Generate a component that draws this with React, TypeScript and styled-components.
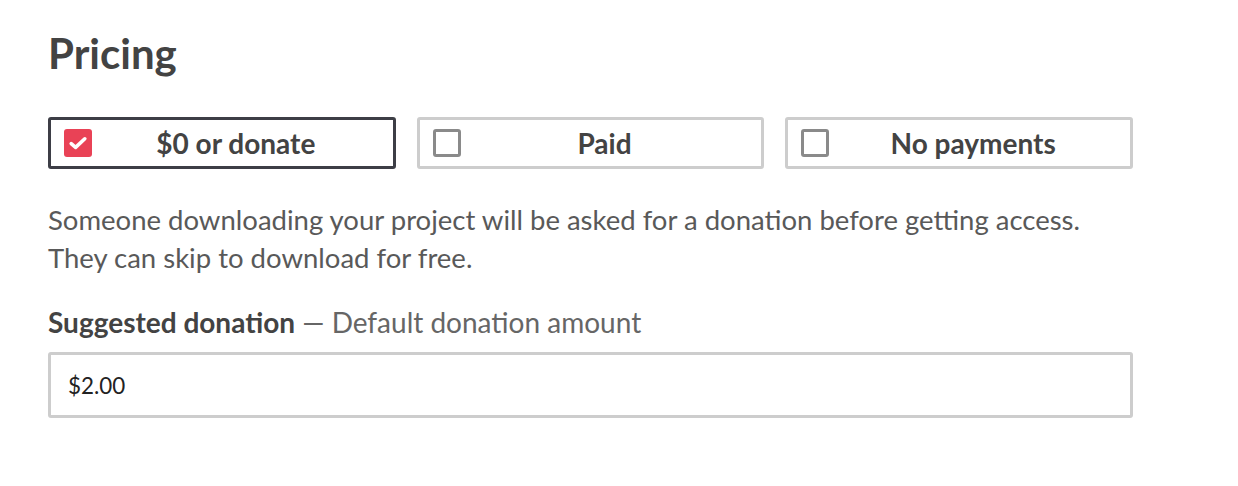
import React, { useState } from 'react';
import styled, { createGlobalStyle } from 'styled-components';

type PriceOption = 'donate' | 'paid' | 'none';

const options: { id: PriceOption; label: string }[] = [
  { id: 'donate', label: '$0 or donate' },
  { id: 'paid', label: 'Paid' },
  { id: 'none', label: 'No payments' },
];

const descriptions: Record<PriceOption, string[]> = {
  donate: [
    'Someone downloading your project will be asked for a donation before getting access.',
    'They can skip to download for free.',
  ],
  paid: ['Someone downloading your project must pay before getting access.'],
  none: ['The project will be free to download and no payments will be requested.'],
};

export default function App() {
  const [selected, setSelected] = useState<PriceOption>('donate');

  return (
    <>
      <GlobalStyle />
      <Page>
        <Title>Pricing</Title>
        <OptionRow>
          {options.map((o) => (
            <OptionButton
              key={o.id}
              $active={selected === o.id}
              onClick={() => setSelected(o.id)}
            >
              <Box $checked={selected === o.id}>
                {selected === o.id && (
                  <CheckMark viewBox="0 0 28 28">
                    <path
                      d="M7.2 14.6l4.4 3.8L20.8 9.8"
                      fill="none"
                      stroke="#fff"
                      strokeWidth="3.6"
                      strokeLinecap="round"
                      strokeLinejoin="round"
                    />
                  </CheckMark>
                )}
              </Box>
              <OptionLabel>{o.label}</OptionLabel>
            </OptionButton>
          ))}
        </OptionRow>
        <Description>
          {descriptions[selected].map((line) => (
            <span key={line}>{line}</span>
          ))}
        </Description>
        <Label>
          <strong>Suggested donation</strong>
          <Sub> — Default donation amount</Sub>
        </Label>
        <AmountInput defaultValue="$2.00" />
      </Page>
    </>
  );
}

const GlobalStyle = createGlobalStyle`
  body {
    margin: 0;
    background: #fff;
    font-family: Lato, "Open Sans", sans-serif;
  }
`;

const Page = styled.div`
  width: 1085px;
  padding: 26px 0 0 48px;
  display: flex;
  flex-direction: column;
`;

const Title = styled.h2`
  margin: 0;
  font-size: 42px;
  font-weight: 700;
  line-height: 54px;
  color: #434343;
`;

const OptionRow = styled.div`
  margin-top: 37px;
  display: grid;
  grid-template-columns: repeat(3, 1fr);
  gap: 21px;
`;

const OptionButton = styled.button<{ $active: boolean }>`
  position: relative;
  height: 52px;
  display: flex;
  align-items: center;
  justify-content: center;
  padding: 0 16px 0 44px;
  background: #fff;
  border: 3px solid ${({ $active }) => ($active ? '#3d3e46' : '#cdcdcd')};
  border-radius: 3px;
  cursor: pointer;
  font-family: inherit;
`;

const Box = styled.span<{ $checked: boolean }>`
  position: absolute;
  left: 13px;
  top: 9px;
  width: 28px;
  height: 28px;
  box-sizing: border-box;
  border-radius: 3px;
  display: flex;
  align-items: center;
  justify-content: center;
  background: ${({ $checked }) => ($checked ? '#e94256' : '#fff')};
  border: ${({ $checked }) => ($checked ? 'none' : '3px solid #8a8a8a')};
`;

const CheckMark = styled.svg`
  width: 28px;
  height: 28px;
  flex: none;
  display: block;
`;

const OptionLabel = styled.span`
  font-size: 28px;
  font-weight: 700;
  color: #434343;
`;

const Description = styled.p`
  margin: 32px 0 0;
  display: flex;
  flex-direction: column;
  font-size: 27.5px;
  line-height: 38px;
  color: #595959;
`;

const Label = styled.div`
  margin-top: 28px;
  font-size: 28px;
  line-height: 34px;
  color: #434343;

  strong {
    font-weight: 700;
  }
`;

const Sub = styled.span`
  color: #666;
`;

const AmountInput = styled.input`
  margin-top: 13px;
  height: 66px;
  box-sizing: border-box;
  padding: 0 17px;
  border: 3px solid #cdcdcd;
  border-radius: 3px;
  font-family: inherit;
  font-size: 22.4px;
  color: #222;
  outline: none;
`;
